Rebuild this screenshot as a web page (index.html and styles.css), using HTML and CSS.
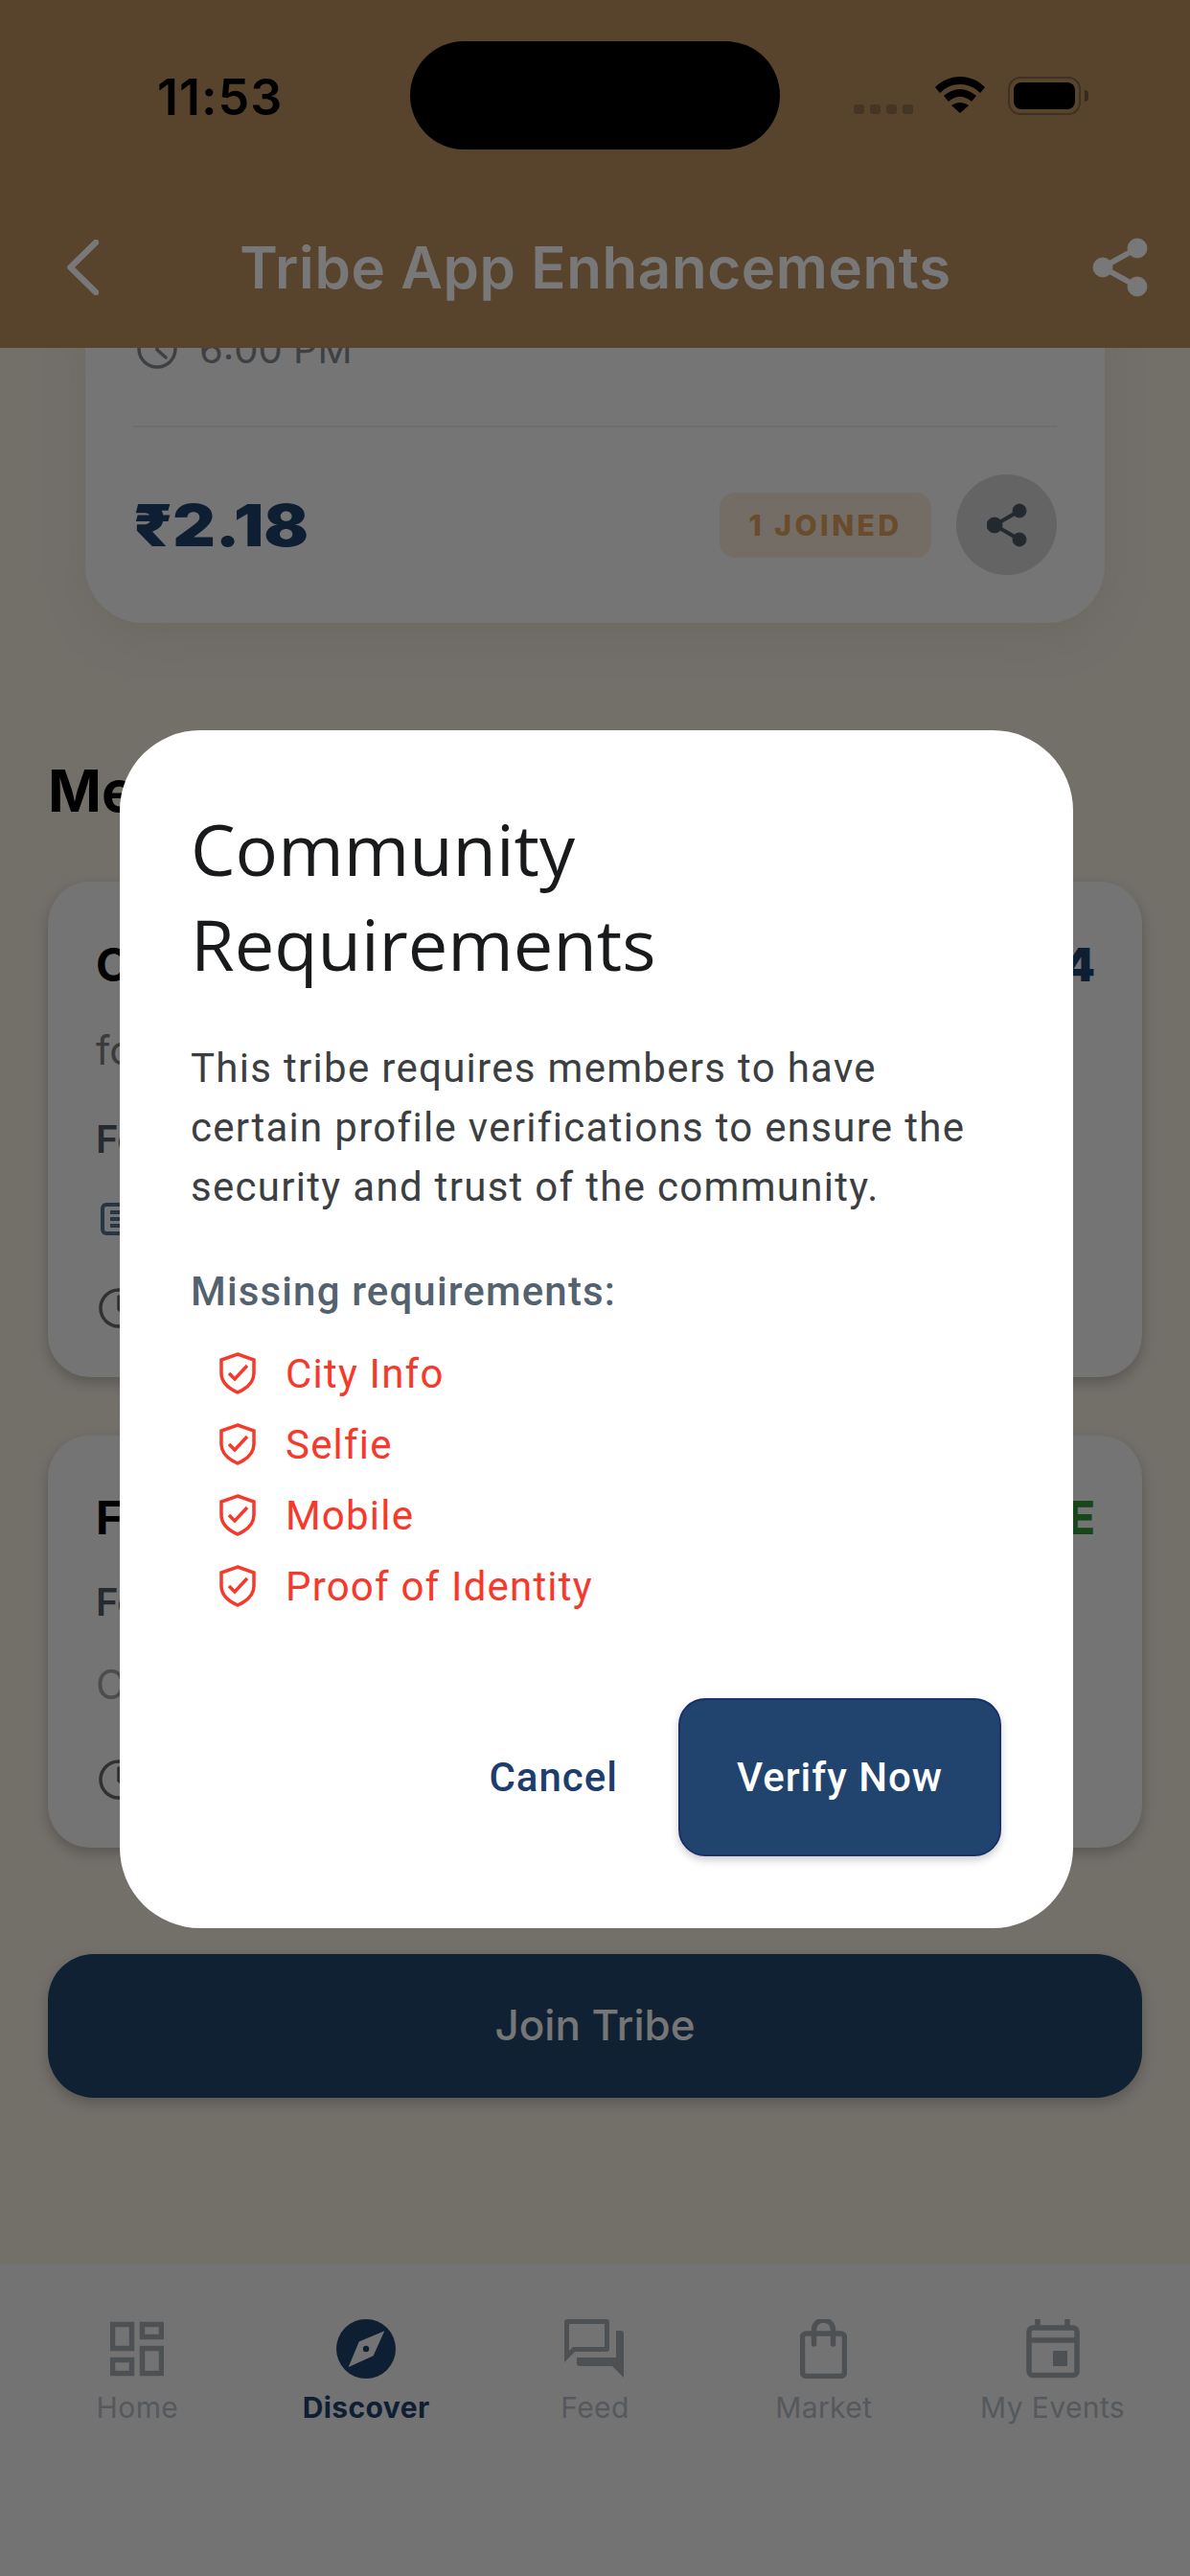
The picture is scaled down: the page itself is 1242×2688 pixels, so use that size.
FILE: index.html
```html
<!DOCTYPE html>
<html lang="en">
<head>
<meta charset="utf-8">
<title>Tribe App Enhancements</title>
<link rel="stylesheet" href="styles.css">
</head>
<body>
<div class="screen">
  <header class="topbar">
    <div class="status">
      <span class="time">11:53</span>
      <span class="island"></span>
      <div class="status-icons">
        <div class="signal"><i></i><i></i><i></i><i></i></div>
        <svg class="wifi" viewBox="0 0 52 38"><path d="M0 11C7 4 16 0 26 0s19 4 26 11l-5 6C41 11 34 8 26 8S11 11 5 17Z"/><path d="M9 20c5-4 11-7 17-7s12 3 17 7l-5 6c-3-3-7-5-12-5s-9 2-12 5Z"/><path d="M17 30c3-2 6-3 9-3s6 1 9 3l-9 8Z"/></svg>
        <div class="battery"><div class="battery-fill"></div></div>
        <span class="battery-cap"></span>
      </div>
    </div>
    <div class="navbar">
      <svg class="back" viewBox="0 0 33 58"><path d="M30 3 3.500 29 30 55"/></svg>
      <h1 class="page-title">Tribe App Enhancements</h1>
      <svg class="share" viewBox="0 0 58 62"><circle cx="47" cy="11" r="10"/><circle cx="11" cy="31" r="10"/><circle cx="47" cy="51" r="10"/><path d="M47 11 11 31l36 20" fill="none" stroke-width="6"/></svg>
    </div>
  </header>

  <main class="content">
    <section class="event-card">
      <div class="time-row">
        <svg class="clock" viewBox="0 0 42 42"><circle cx="21" cy="21" r="19"/><path d="M21 9v13l9 8"/></svg>
        <span>6:00 PM</span>
      </div>
      <div class="divider"></div>
      <div class="event-foot">
        <div class="price-wrap"><span class="price">₹2.18</span></div>
        <span class="joined">1 JOINED</span>
        <span class="share-btn">
          <svg class="share-small" viewBox="0 0 42 46"><circle cx="34" cy="8" r="7"/><circle cx="8" cy="23" r="8"/><circle cx="34" cy="38" r="7"/><path d="M34 8 8 23l26 15" fill="none" stroke-width="4"/></svg>
        </span>
      </div>
    </section>

    <h2 class="section-title">Me</h2>

    <section class="plan-card plan-one">
      <div class="plan-head"><span class="plan-name">C</span><span class="plan-price">4</span></div>
      <p class="plan-desc">fo</p>
      <p class="plan-meta">Fe</p>
      <svg class="doc" viewBox="0 0 40 34"><rect x="2" y="2" width="36" height="30" rx="4"/><path d="M10 10h24M10 17h24M10 24h24"/></svg>
      <svg class="clock plan-clock" viewBox="0 0 42 42"><circle cx="21" cy="21" r="19"/><path d="M21 9v13l9 8"/></svg>
    </section>

    <section class="plan-card plan-two">
      <div class="plan-head"><span class="plan-name">F</span><span class="plan-free">E</span></div>
      <p class="plan-meta">Fe</p>
      <p class="plan-desc">C</p>
      <svg class="clock plan-clock" viewBox="0 0 42 42"><circle cx="21" cy="21" r="19"/><path d="M21 9v13l9 8"/></svg>
    </section>

    <div class="join-btn">Join Tribe</div>
  </main>

  <nav class="tabbar">
    <div class="tab">
      <svg class="tab-icon" width="56" height="62" viewBox="0 0 56 62"><g class="line" transform="translate(0 3)"><rect x="2.500" y="2.500" width="20" height="25"/><rect x="33.500" y="2.500" width="20" height="13"/><rect x="2.500" y="39.500" width="20" height="14"/><rect x="33.500" y="27.500" width="20" height="26"/></g></svg>
      <span>Home</span>
    </div>
    <div class="tab active">
      <svg class="tab-icon" width="62" height="62" viewBox="0 0 62 62"><circle class="compass-bg" cx="31" cy="31" r="31"/><path class="needle" d="M50.300 12.300 38.600 38.300 12.700 50 23.700 23.400Z"/><circle class="compass-bg" cx="31" cy="31" r="3.200"/></svg>
      <span>Discover</span>
    </div>
    <div class="tab">
      <svg class="tab-icon" width="63" height="62" viewBox="0 0 63 62"><path class="solid" fill-rule="evenodd" d="M3 0H44a3 3 0 0 1 3 3V31a3 3 0 0 1-3 3H11L0 45V3a3 3 0 0 1 3-3ZM5 5V33L9 29H42V5Z"/><path class="solid" d="M54 12H59a3 3 0 0 1 3 3V61L50 49H16a3 3 0 0 1-3-3V40H54Z"/></svg>
      <span>Feed</span>
    </div>
    <div class="tab">
      <svg class="tab-icon" width="49" height="62" viewBox="0 0 49 62"><g class="line"><rect x="2.500" y="15" width="44" height="44.500" rx="4"/><path class="round" d="M14.500 26V11a10 10 0 0 1 20 0V26"/></g></svg>
      <span>Market</span>
    </div>
    <div class="tab">
      <svg class="tab-icon" width="56" height="62" viewBox="0 0 56 62"><g class="line"><rect x="3" y="9" width="50" height="49.500" rx="4"/><path d="M12 0V9M43 0V9M3 22H53"/></g><rect class="solid" x="28" y="33" width="15" height="16"/></svg>
      <span>My Events</span>
    </div>
  </nav>

  <div class="scrim">
    <div class="dialog">
      <h2 class="dialog-title">Community Requirements</h2>
      <p class="dialog-body">This tribe requires members to have certain profile verifications to ensure the security and trust of the community.</p>
      <h3 class="missing-title">Missing requirements:</h3>
      <ul class="missing-list">
        <li><svg class="shield" viewBox="0 0 38 44"><path d="M19 2 36 8V22C36 32 28 38 19 42 10 38 2 32 2 22V8Z"/><path d="M10 22l6 6 13-14"/></svg>City Info</li>
        <li><svg class="shield" viewBox="0 0 38 44"><path d="M19 2 36 8V22C36 32 28 38 19 42 10 38 2 32 2 22V8Z"/><path d="M10 22l6 6 13-14"/></svg>Selfie</li>
        <li><svg class="shield" viewBox="0 0 38 44"><path d="M19 2 36 8V22C36 32 28 38 19 42 10 38 2 32 2 22V8Z"/><path d="M10 22l6 6 13-14"/></svg>Mobile</li>
        <li><svg class="shield" viewBox="0 0 38 44"><path d="M19 2 36 8V22C36 32 28 38 19 42 10 38 2 32 2 22V8Z"/><path d="M10 22l6 6 13-14"/></svg>Proof of Identity</li>
      </ul>
      <div class="dialog-actions">
        <span class="cancel">Cancel</span>
        <span class="verify">Verify Now</span>
      </div>
    </div>
  </div>
</div>
</body>
</html>
```
FILE: styles.css
```css
* { box-sizing: border-box; }
html, body { margin: 0; padding: 0; }
body { font-family: Inter, "Liberation Sans", sans-serif; }
p, h1, h2, h3, ul { margin: 0; padding: 0; }

.screen {
  position: relative;
  width: 1242px;
  height: 2688px;
  overflow: hidden;
  display: flex;
  flex-direction: column;
  background: #e6e0d5;
}

/* top bar */
.topbar {
  height: 363px;
  flex: none;
  background: #b08758;
  position: relative;
  z-index: 1;
}
.status {
  height: 247px;
  padding: 43px 0 0 164px;
  display: flex;
  align-items: flex-start;
}
.time {
  margin-top: 29px;
  width: 264px;
  font-size: 52px;
  line-height: 60px;
  font-weight: 600;
  letter-spacing: 1px;
  color: #000;
}
.island {
  width: 386px;
  height: 113px;
  border-radius: 57px;
  background: #000;
}
.status-icons {
  margin: 37px 0 0 77px;
  display: flex;
  align-items: flex-start;
}
.signal {
  display: flex;
  gap: 6px;
  margin-top: 29px;
  margin-right: 23px;
}
.signal i {
  width: 11px;
  height: 10px;
  border-radius: 3px;
  background: #8a6a48;
}
.wifi { width: 52px; height: 38px; fill: #000; margin-right: 24px; }
.battery {
  width: 76px;
  height: 40px;
  padding: 4px;
  border: 2px solid #7c6044;
  border-radius: 13px;
}
.battery-fill { width: 100%; height: 100%; background: #000; border-radius: 8px; }
.battery-cap {
  width: 4px;
  height: 12px;
  margin: 14px 0 0 4px;
  border-radius: 0 6px 6px 0;
  background: #6f563c;
}

.navbar {
  display: flex;
  align-items: center;
  justify-content: space-between;
  height: 64px;
  padding: 0 44px 0 70px;
}
.back { width: 33px; height: 58px; fill: none; stroke: #f0f0f0; stroke-width: 6.500; stroke-linecap: round; stroke-linejoin: round; }
.page-title {
  font-size: 60px;
  line-height: 64px;
  font-weight: 600;
  letter-spacing: .6px;
  color: #f0f0f0;
}
.share { width: 58px; height: 62px; fill: #f0f0f0; stroke: #f0f0f0; }

/* content */
.content {
  flex: 1;
  min-height: 0;
  overflow: hidden;
  padding: 0 50px;
  display: flex;
  flex-direction: column;
}
.event-card {
  flex: none;
  margin: -40px 39px 0;
  padding: 19px 50px 50px;
  background: #eaeaea;
  border-radius: 0 0 60px 60px;
  box-shadow: 0 16px 50px rgba(120, 100, 70, .12);
}
.time-row {
  display: flex;
  align-items: center;
  gap: 23px;
  padding-left: 4px;
  height: 44px;
  font-size: 40px;
  color: #7d8389;
}
.clock { width: 42px; height: 42px; fill: none; stroke: #7d8389; stroke-width: 3.500; stroke-linecap: round; }
.divider { height: 2px; margin-top: 58px; background: #dcdcdc; }
.event-foot {
  display: flex;
  align-items: center;
  height: 105px;
  margin-top: 49px;
}
.price-wrap { flex: 1; }
.price {
  display: inline-block;
  transform: scaleX(1.15);
  transform-origin: left center;
  font-size: 60px;
  font-weight: 900;
  color: #1c3e68;
}
.joined {
  width: 221px;
  height: 68px;
  margin-right: 26px;
  display: flex;
  align-items: center;
  justify-content: center;
  border-radius: 16px;
  background: #e8dacb;
  color: #d09858;
  font-size: 30px;
  font-weight: 800;
  letter-spacing: 3.500px;
}
.share-btn {
  width: 105px;
  height: 105px;
  border-radius: 50%;
  background: #c8c8c8;
  display: flex;
  align-items: center;
  justify-content: center;
}
.share-small { width: 42px; height: 46px; fill: #47535c; stroke: #47535c; }

.section-title {
  flex: none;
  margin-top: 139px;
  font-size: 60px;
  line-height: 72px;
  font-weight: 700;
  color: #000;
}

.plan-card {
  flex: none;
  background: #e8e8e8;
  border-radius: 44px;
  padding: 57px 49px 0 50px;
  box-shadow: 0 6px 14px rgba(0, 0, 0, .22);
  display: flex;
  flex-direction: column;
  align-items: flex-start;
}
.plan-one { margin-top: 59px; height: 517px; }
.plan-two { margin-top: 61px; height: 430px; padding-top: 56px; }
.plan-head {
  align-self: stretch;
  display: flex;
  justify-content: space-between;
  height: 60px;
  line-height: 60px;
  font-size: 48px;
  font-weight: 700;
  color: #000;
}
.plan-price { font-weight: 900; color: #1c3e68; }
.plan-free { font-weight: 800; color: #2f8f33; }
.plan-desc {
  font-size: 42px;
  line-height: 50px;
  color: #777;
}
.plan-meta {
  font-size: 40px;
  line-height: 50px;
  font-weight: 600;
  color: #4e5760;
}
.plan-one .plan-desc { margin-top: 34px; }
.plan-one .plan-meta { margin-top: 43px; }
.doc { width: 40px; height: 34px; margin: 41px 0 0 5px; fill: none; stroke: #4f6c8a; stroke-width: 4; }
.plan-clock { margin: 55px 0 0 3px; stroke: #5e6266; }
.plan-two .plan-meta { margin-top: 33px; }
.plan-two .plan-desc { margin-top: 36px; color: #999; }
.plan-two .plan-clock { margin-top: 53px; }

.join-btn {
  flex: none;
  height: 150px;
  margin-top: 111px;
  padding-bottom: 2px;
  display: flex;
  align-items: center;
  justify-content: center;
  border-radius: 48px;
  background: #1e4266;
  color: #ececec;
  font-size: 44px;
  font-weight: 500;
  box-shadow: 0 6px 14px rgba(0, 0, 0, .22);
}

/* tab bar */
.tabbar {
  height: 326px;
  flex: none;
  padding: 58px 24px 0;
  background: #e6e6e6;
  display: grid;
  grid-template-columns: repeat(5, 1fr);
  align-items: start;
}
.tab {
  display: flex;
  flex-direction: column;
  align-items: center;
  gap: 11px;
  font-size: 30px;
  line-height: 38px;
  letter-spacing: .4px;
  color: #aab3ba;
}
.tab.active { color: #1c3d66; font-weight: 700; }
.tab-icon { display: block; }
.line { fill: none; stroke: #9aa2a9; stroke-width: 5.500; }
.line .round { stroke-linecap: round; }
.solid { fill: #9aa2a9; }
.compass-bg { fill: #1c3f68; }
.needle { fill: #e6e6e6; }

/* dialog */
.scrim {
  position: absolute;
  inset: 0;
  z-index: 2;
  background: rgba(0, 0, 0, .5);
  display: flex;
  justify-content: center;
  padding: 762px 0 0 3px;
}
.dialog {
  width: 995px;
  height: 1250px;
  padding: 74px 75px 75px 74px;
  background: #fff;
  border-radius: 84px;
}
.dialog-title {
  font-family: "Open Sans", "Noto Sans", sans-serif;
  font-size: 74px;
  line-height: 99px;
  font-weight: 400;
  color: #181a1c;
}
.dialog-body {
  margin-top: 50px;
  font-family: Roboto, sans-serif;
  font-size: 42px;
  line-height: 62px;
  letter-spacing: 1.300px;
  color: #3c3f42;
}
.missing-title {
  margin-top: 53px;
  font-family: Roboto, sans-serif;
  font-size: 42px;
  line-height: 50px;
  font-weight: 500;
  letter-spacing: 1.150px;
  color: #54626f;
}
.missing-list {
  margin-top: 23px;
  list-style: none;
  font-family: Roboto, sans-serif;
  font-size: 42px;
  letter-spacing: 1.200px;
  color: #f5392b;
}
.missing-list li {
  display: flex;
  align-items: center;
  gap: 31px;
  height: 74px;
  padding-left: 30px;
}
.shield { width: 38px; height: 44px; fill: none; stroke: #f5392b; stroke-width: 3.500; }
.dialog-actions {
  margin-top: 80px;
  display: flex;
  justify-content: flex-end;
  align-items: center;
  gap: 63px;
  font-family: Roboto, sans-serif;
  font-size: 42px;
  font-weight: 500;
  letter-spacing: 1px;
}
.cancel { color: #1c3d6e; }
.verify {
  width: 337px;
  height: 165px;
  display: flex;
  align-items: center;
  justify-content: center;
  border: 2px solid #1b2f6b;
  border-radius: 28px;
  background: #21446f;
  color: #fff;
  box-shadow: 0 4px 8px rgba(0, 0, 0, .2);
}
```
